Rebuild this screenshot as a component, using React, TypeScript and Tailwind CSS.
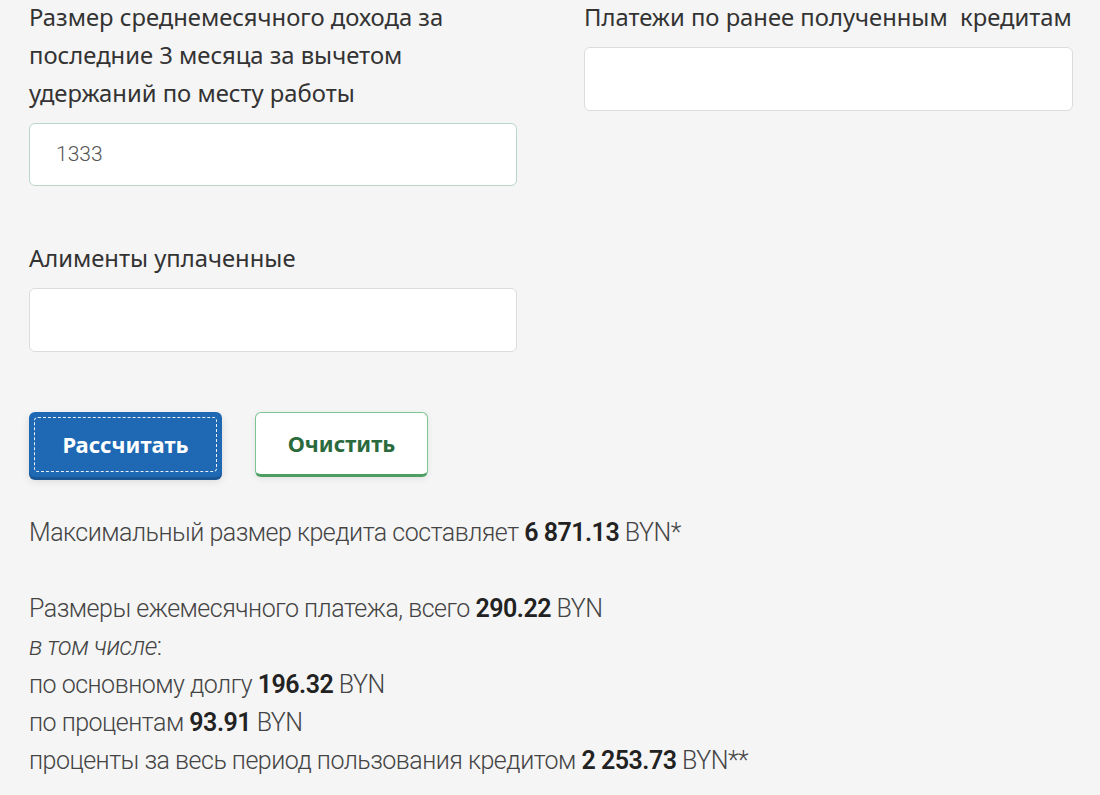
import React from "react";

export default function App() {
  const label = "text-[23.8px] leading-[38px] text-[#333]";
  const res = "text-[25px] leading-[38px] text-[#444] font-light tracking-[-0.5px]";
  const num = "font-semibold text-[#222]";
  return (
    <div className="min-h-[795px] w-[1100px] bg-[#f5f5f5] pl-[29px] [font-family:'Noto_Sans',sans-serif]">
      <div className="grid grid-cols-[488px_489px] gap-x-[67px]">
        <div className="flex flex-col">
          <div className={label + " -mt-[2px]"}>
            Размер среднемесячного дохода за последние 3 месяца за вычетом удержаний по месту работы
          </div>
          <div className="mt-[11px] flex h-[63px] items-center rounded-[6px] border border-[#b9d6c6] bg-white pl-[26px] text-[21px] text-[#555] [font-family:'Roboto',sans-serif] font-light">
            1333
          </div>
          <div className={label + " mt-[53px]"}>Алименты уплаченные</div>
          <div className="mt-[11px] h-[64px] rounded-[6px] border border-[#dcdcdc] bg-white" />
        </div>
        <div className="flex flex-col">
          <div className={label + " -mt-[2px] whitespace-pre"}>Платежи по ранее полученным  кредитам</div>
          <div className="mt-[11px] h-[64px] rounded-[6px] border border-[#dcdcdc] bg-white" />
        </div>
      </div>

      <div className="mt-[60px] flex gap-[33px]">
        <button className="relative h-[65px] w-[193px] rounded-[6px] bg-[#1f68b3] text-[22px] font-bold text-white shadow-[0_3px_0_#1a5594,0_4px_8px_rgba(0,0,0,0.12)] [font-family:'Noto_Sans',sans-serif]">
          <span className="absolute inset-[5px] rounded-[4px] border border-dashed border-white/90" />
          <span className="relative">Рассчитать</span>
        </button>
        <button className="h-[65px] w-[173px] rounded-[6px] border border-[#7cc493] border-b-[3px] border-b-[#4d9e63] bg-white text-[22px] font-bold text-[#2a6a3d] shadow-[0_2px_6px_rgba(0,0,0,0.08)] [font-family:'Noto_Sans',sans-serif]">
          Очистить
        </button>
      </div>

      <div className="mt-[37px] [font-family:'Roboto',sans-serif]">
        <div className={res}>
          Максимальный размер кредита составляет <b className={num}>6 871.13</b> BYN*
        </div>
        <div className="h-[38px]" />
        <div className={res}>
          Размеры ежемесячного платежа, всего <b className={num}>290.22</b> BYN
        </div>
        <div className={res}>
          <i>в том числе</i>:
        </div>
        <div className={res}>
          по основному долгу <b className={num}>196.32</b> BYN
        </div>
        <div className={res}>
          по процентам <b className={num}>93.91</b> BYN
        </div>
        <div className={res}>
          проценты за весь период пользования кредитом <b className={num}>2 253.73</b> BYN**
        </div>
      </div>
    </div>
  );
}
